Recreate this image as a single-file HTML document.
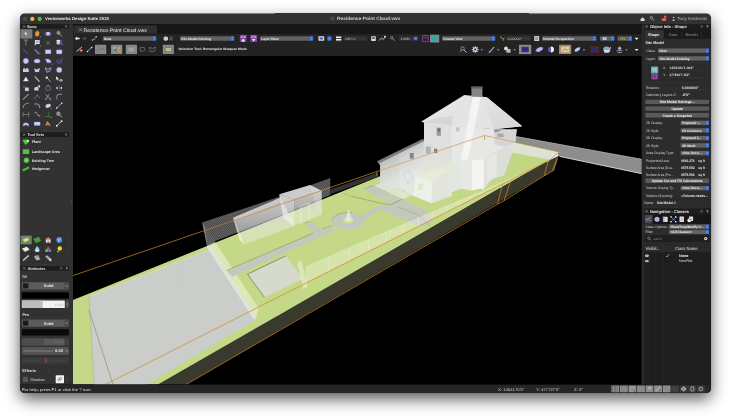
<!DOCTYPE html>
<html lang="en">
<head>
<meta charset="utf-8">
<title>Vectorworks Design Suite 2023 - Residence-Point Cloud.vwx</title>
<style>
html,body{margin:0;padding:0;background:#fff;width:731px;height:420px;overflow:hidden}
body{position:relative;font-family:"Liberation Sans",sans-serif}
#shadow{position:absolute;left:20.0px;top:13.5px;width:691.0px;height:379.5px;border-radius:5px;
 box-shadow:0 6px 16px rgba(0,0,0,.66),0 0 1px rgba(0,0,0,.5);background:#222}
#app{position:absolute;left:0;top:0;width:731px;height:420px;display:block;will-change:transform;
 clip-path:inset(13.5px 20.0px 27.0px 20.0px round 4.5px)}
#app text{font-family:"Liberation Sans",sans-serif;white-space:pre;text-rendering:geometricPrecision}
</style>
</head>
<body>
<div id="shadow"></div>
<svg id="app" viewBox="0 0 731 420" width="731" height="420">
<g id="viewport">
<rect x="0.00" y="0.00" width="731.00" height="420.00" fill="#000"/>
<defs>
<pattern id="hatch" width="1.6" height="1.6" patternUnits="userSpaceOnUse" patternTransform="rotate(35)"><rect width="1.6" height="1.6" fill="#6c6c6c"/><rect width="0.8" height="1.6" fill="#4a4a4a"/></pattern>
<linearGradient id="gShed" x1="0" y1="0" x2="0" y2="1"><stop offset="0" stop-color="#c4c6c4" stop-opacity="0.95"/><stop offset="1" stop-color="#ffffff" stop-opacity="0.25"/></linearGradient>
<linearGradient id="gWall" x1="0" y1="0" x2="0" y2="1"><stop offset="0" stop-color="#dcdcdc"/><stop offset="1" stop-color="#e4e8dc"/></linearGradient>
<linearGradient id="gRoofR" x1="0" y1="0" x2="1" y2="1"><stop offset="0" stop-color="#e4e4e4"/><stop offset="1" stop-color="#d6d6d6"/></linearGradient>
<linearGradient id="gStack" x1="0" y1="0" x2="0" y2="1"><stop offset="0" stop-color="#f7f7f7" stop-opacity="1"/><stop offset="0.5" stop-color="#f4f4f4" stop-opacity="0.9"/><stop offset="1" stop-color="#ffffff" stop-opacity="0.55"/></linearGradient>
<linearGradient id="gShed2" x1="0" y1="0" x2="0" y2="1"><stop offset="0" stop-color="#d4d6d4" stop-opacity="0.95"/><stop offset="1" stop-color="#ffffff" stop-opacity="0.5"/></linearGradient>
<linearGradient id="gExt" gradientUnits="userSpaceOnUse" x1="400" y1="151.5" x2="411" y2="174.5"><stop offset="0" stop-color="#bcbebc"/><stop offset="0.35" stop-color="#cdcfcc"/><stop offset="1" stop-color="#e0e2df"/></linearGradient>
<linearGradient id="gExt2" gradientUnits="userSpaceOnUse" x1="400" y1="151.5" x2="411" y2="174.5"><stop offset="0" stop-color="#c6c8c6"/><stop offset="0.4" stop-color="#d6d8d5"/><stop offset="1" stop-color="#e4e6e2"/></linearGradient>
<clipPath id="vp"><rect x="73" y="56" width="569.4" height="328.6"/></clipPath>
</defs>
<g id="scene" clip-path="url(#vp)">
<polygon points="515.3,136.2 642.4,159.2 642.4,174.0 559.6,156.6 514.0,142.0" fill="#8d8d8d"/>
<polyline points="515.3,136.4 642.4,159.4" fill="none" stroke="#b0b0b0" stroke-width="0.7"/>
<polyline points="559.6,156.4 642.4,173.8" fill="none" stroke="#d6d6d6" stroke-width="0.9"/>
<polygon points="158.0,384.6 545.6,162.0 548.4,160.8 559.5,152.2 553.7,170.5 544.2,175.8 186.0,384.6" fill="#39392e"/>
<polygon points="73.0,300.0 378.0,177.0 483.0,136.0 514.0,142.0 559.6,152.0 548.4,161.4 545.0,162.2 158.0,384.6 73.0,384.6" fill="#c5d888"/>
<polygon points="503.9,175.6 512.8,150.7 549.5,159.6 548.4,161.4 545.0,162.2 500.0,188.0" fill="#c3d684"/>
<polygon points="484.0,137.0 514.0,142.0 559.4,152.0 549.5,159.6 511.0,152.6 486.0,147.0" fill="#dde2d4"/>
<polygon points="550.4,159.8 558.2,156.2 558.6,153.0 549.2,158.0" fill="#e8e8e8"/>
<polygon points="89.4,296.4 211.4,249.2 257.0,319.3 146.2,384.6 94.2,384.6" fill="#cacdc9"/>
<polyline points="89.4,296.4 211.4,249.2" fill="none" stroke="#dfe2dc" stroke-width="0.5"/>
<polyline points="89.0,296.0 94.0,384.6" fill="none" stroke="#aab08c" stroke-width="0.5"/>
<polyline points="89.0,310.0 113.0,384.6" fill="none" stroke="#6c7048" stroke-width="0.45"/>
<polyline points="168.0,261.5 176.0,270.0 183.0,281.0" fill="none" stroke="#c0c3bd" stroke-width="0.4"/>
<polygon points="203.5,224.0 259.0,309.0 254.6,320.5 207.3,247.9" fill="#ffffff" opacity="0.42"/>
<polygon points="226.7,270.5 313.8,233.0 322.0,229.3 332.0,225.3 335.8,230.2 288.6,251.0 232.0,277.0" fill="#c3c8bc"/>
<polyline points="226.7,270.4 313.8,232.9" fill="none" stroke="#7f8a58" stroke-width="0.5"/>
<polyline points="322.0,229.2 332.0,225.2" fill="none" stroke="#8a9562" stroke-width="0.45"/>
<polygon points="305.0,223.0 310.5,221.4 322.0,229.3 313.8,233.0" fill="#c3c8bc"/>
<polyline points="305.0,223.0 310.5,221.4" fill="none" stroke="#8a9562" stroke-width="0.45"/>
<polygon points="247.5,274.2 285.8,255.8 303.0,279.0 264.2,297.5" fill="#d6dacd"/>
<polyline points="264.4,297.4 247.5,274.2 285.8,255.8" fill="none" stroke="#7d8a5c" stroke-width="0.9"/>
<polygon points="297.0,262.5 301.5,260.5 307.5,287.0 303.5,289.0" fill="#ffffff" opacity="0.4"/>
<ellipse cx="348.30" cy="221.00" rx="16.4" ry="8.6" fill="#c3c8bc"/>
<path d="M331.9 221 A16.4 8.6 0 0 1 352 212.7" fill="none" stroke="#7f8a58" stroke-width="0.45"/>
<ellipse cx="348.10" cy="221.30" rx="5.8" ry="2.7" fill="#cbdc94"/>
<polygon points="343.6,221.0 346.8,213.6 348.5,208.8 350.2,213.6 353.2,221.0 348.4,222.6" fill="#f6f8f2" opacity="0.4"/>
<polygon points="347.2,220.0 348.5,209.4 349.8,220.0" fill="#ffffff" opacity="0.5"/>
<polygon points="361.0,215.4 379.6,204.6 384.0,207.4 364.4,219.6" fill="#c3c8bc"/>
<polygon points="374.2,185.4 380.4,183.6 413.5,194.3 402.5,199.2" fill="#dde4cf"/>
<polygon points="363.8,188.8 374.2,185.4 402.5,199.2 390.0,204.7" fill="#c3c8bc"/>
<polyline points="377.4,197.1 388.9,192.6" fill="none" stroke="#cfde98" stroke-width="0.7"/>
<polyline points="380.8,199.1 392.6,194.4" fill="none" stroke="#cfde98" stroke-width="0.7"/>
<polyline points="384.2,201.2 396.3,196.2" fill="none" stroke="#cfde98" stroke-width="0.7"/>
<polyline points="387.6,203.3 400.0,198.0" fill="none" stroke="#cfde98" stroke-width="0.7"/>
<polygon points="379.0,205.0 390.0,204.7 396.3,202.0 404.6,199.9 428.0,211.8 433.0,221.4 423.0,226.4 404.6,220.6 384.5,211.6" fill="#c3c8bc"/>
<polyline points="352.0,196.4 381.0,203.3 390.0,204.7 402.5,199.2" fill="none" stroke="#6f7a52" stroke-width="0.45"/>
<polyline points="363.8,188.8 374.2,185.4" fill="none" stroke="#7f8a60" stroke-width="0.4"/>
<polyline points="397.0,206.8 419.0,215.0 430.0,226.0" fill="none" stroke="#8a9468" stroke-width="0.4"/>
<polyline points="343.0,193.3 352.0,196.4" fill="none" stroke="#8a9a5e" stroke-width="0.4"/>
<polygon points="306.0,266.5 390.0,230.0 476.0,193.5 530.0,169.4 530.0,170.2 476.0,197.0 306.0,282.6" fill="#ffffff" opacity="0.3"/>
<line x1="306.00" y1="266.50" x2="306.00" y2="283.34" stroke="#ffffff" stroke-width="0.5" opacity="0.5"/>
<line x1="328.32" y1="256.89" x2="328.32" y2="272.09" stroke="#ffffff" stroke-width="0.5" opacity="0.5"/>
<line x1="349.08" y1="247.96" x2="349.08" y2="261.63" stroke="#ffffff" stroke-width="0.5" opacity="0.5"/>
<line x1="368.38" y1="239.64" x2="368.38" y2="251.91" stroke="#ffffff" stroke-width="0.5" opacity="0.5"/>
<line x1="386.34" y1="231.92" x2="386.34" y2="242.86" stroke="#ffffff" stroke-width="0.5" opacity="0.5"/>
<line x1="403.03" y1="224.73" x2="403.03" y2="234.45" stroke="#ffffff" stroke-width="0.5" opacity="0.5"/>
<line x1="418.56" y1="218.04" x2="418.56" y2="226.63" stroke="#ffffff" stroke-width="0.5" opacity="0.5"/>
<line x1="433.00" y1="211.83" x2="433.00" y2="219.35" stroke="#ffffff" stroke-width="0.5" opacity="0.5"/>
<line x1="446.43" y1="206.04" x2="446.43" y2="212.59" stroke="#ffffff" stroke-width="0.5" opacity="0.5"/>
<line x1="458.92" y1="200.67" x2="458.92" y2="206.29" stroke="#ffffff" stroke-width="0.5" opacity="0.5"/>
<line x1="470.54" y1="195.67" x2="470.54" y2="200.44" stroke="#ffffff" stroke-width="0.5" opacity="0.5"/>
<line x1="481.34" y1="191.02" x2="481.34" y2="195.00" stroke="#ffffff" stroke-width="0.5" opacity="0.5"/>
<line x1="491.38" y1="186.69" x2="491.38" y2="189.94" stroke="#ffffff" stroke-width="0.5" opacity="0.5"/>
<line x1="500.73" y1="182.67" x2="500.73" y2="185.23" stroke="#ffffff" stroke-width="0.5" opacity="0.5"/>
<line x1="509.42" y1="178.93" x2="509.42" y2="180.85" stroke="#ffffff" stroke-width="0.5" opacity="0.5"/>
<line x1="517.50" y1="175.45" x2="517.50" y2="176.78" stroke="#ffffff" stroke-width="0.5" opacity="0.5"/>
<polyline points="306.0,266.5 390.0,230.0 476.0,193.5" fill="none" stroke="#ffffff" stroke-width="0.4" opacity="0.45"/>
<polygon points="330.3,189.6 378.0,172.6 378.0,177.0 330.8,194.0" fill="#3c3c3c" opacity="0.85"/>
<polygon points="202.0,222.5 250.3,206.6 281.0,196.0 330.3,178.0 330.3,195.0 236.0,233.0 207.5,244.0" fill="url(#hatch)" opacity="0.95"/>
<polygon points="202.4,223.0 204.6,227.3 207.5,247.6 205.6,240.0" fill="#ffffff" opacity="0.35"/>
<polygon points="232.9,217.8 280.5,197.6 283.0,202.0 236.0,221.0" fill="#c6c7c6"/>
<polygon points="236.0,221.0 283.0,202.0 294.5,226.0 244.0,244.5" fill="url(#gShed)"/>
<polygon points="232.9,217.8 236.0,221.0 244.0,244.5 239.4,239.6" fill="#ffffff" opacity="0.6"/>
<polygon points="279.2,194.2 310.0,185.0 321.7,190.8 294.2,199.4" fill="#cbcbcb"/>
<polygon points="279.2,194.2 294.2,199.4 294.2,225.8 283.3,218.3" fill="url(#gShed2)"/>
<polygon points="294.2,199.4 321.7,190.8 321.7,215.0 294.2,225.8" fill="url(#gShed)"/>
<polyline points="300.8,223.4 300.8,205.8 309.2,203.3 309.2,220.8" fill="none" stroke="#f4f4f4" stroke-width="0.5"/>
<polygon points="310.0,185.0 321.7,190.8 321.7,215.0 316.0,205.0" fill="#ffffff" opacity="0.18"/>
<polygon points="380.2,163.0 423.0,141.0 452.0,150.0 452.0,196.0 431.6,203.2 413.0,195.6 404.4,190.2 380.2,184.4" fill="url(#gExt)"/>
<polygon points="377.0,161.3 423.0,138.8 424.4,141.0 378.6,163.6" fill="#7c7c7c"/>
<polygon points="378.6,163.4 424.4,141.0 424.8,143.2 380.2,165.2" fill="#b9b9b9"/>
<polygon points="424.0,122.0 452.0,125.6 494.0,129.3 516.7,129.3 515.4,142.0 512.8,150.7 503.9,175.6 491.4,179.0 483.4,190.0 469.6,184.5 448.2,193.5 431.6,203.2 424.0,198.6 424.0,141.0" fill="url(#gWall)"/>
<polygon points="380.2,163.0 399.4,153.4 399.4,189.0 380.2,184.4" fill="url(#gExt)"/>
<polygon points="399.4,153.4 424.0,141.5 424.0,178.0 413.0,186.0 413.0,195.6 404.4,190.2 399.4,189.0" fill="url(#gExt2)"/>
<polyline points="403.6,174.6 408.6,170.0 413.4,177.6 408.0,183.4 403.6,174.6" fill="none" stroke="#b4bab0" stroke-width="0.4"/>
<polygon points="415.7,176.2 436.4,168.0 450.2,169.3 432.3,181.8" fill="#e6ecd6"/>
<polygon points="415.7,176.2 432.3,181.8 431.6,203.2 413.0,195.6" fill="#eef0ea"/>
<polygon points="432.3,181.8 450.2,169.3 448.2,193.5 431.6,203.2" fill="#e2e5de"/>
<rect x="417.80" y="183.80" width="5.50" height="6.20" fill="#dfe8c8"/>
<polygon points="436.4,168.0 461.3,160.0 470.0,163.0 450.2,169.3" fill="#e3e9d6"/>
<polygon points="450.2,169.3 461.0,158.3 461.0,188.6 448.2,193.5" fill="#e4e7e0"/>
<polygon points="461.0,158.3 474.0,152.0 486.0,150.5 484.3,155.0 471.8,157.5" fill="#eceee8"/>
<polygon points="461.0,158.3 471.8,157.5 471.8,190.5 460.0,188.6" fill="#e6e8e4"/>
<polygon points="471.8,157.5 484.3,155.0 484.3,187.6 471.8,190.5" fill="#f4f5f2"/>
<polygon points="484.3,155.0 505.0,146.0 512.8,150.7 503.9,175.6 491.4,179.0 484.3,187.6" fill="#dcdfd8"/>
<polygon points="486.5,158.0 497.0,153.0 496.4,176.4 486.5,183.0" fill="#e6e8e3"/>
<polygon points="424.0,122.0 451.4,125.6 451.4,152.8 424.0,141.4" fill="#dfdfdf"/>
<polygon points="451.4,125.6 494.0,129.3 494.6,146.0 484.4,136.0 451.4,147.4" fill="#e7e7e7"/>
<polygon points="494.6,132.8 516.7,129.3 515.4,142.0 505.0,146.5 494.6,144.0" fill="#d4d4d4"/>
<polygon points="452.0,147.4 484.4,136.0 494.6,146.0 505.0,146.5 483.4,159.7 461.3,161.0 452.0,164.0" fill="#e6e8e4"/>
<rect x="436.70" y="127.60" width="4.20" height="8.20" fill="#9c9c9c"/>
<rect x="437.50" y="128.60" width="2.60" height="3.00" fill="#6c6c6c"/>
<rect x="409.80" y="153.00" width="4.00" height="5.70" fill="#7f8c8c"/>
<rect x="425.70" y="146.50" width="5.10" height="7.20" fill="#b4b4b4"/>
<rect x="434.00" y="148.70" width="3.30" height="4.40" fill="#8c8078"/>
<rect x="456.00" y="127.20" width="3.40" height="4.40" fill="#c6c6c6"/>
<rect x="497.40" y="133.60" width="6.20" height="3.60" fill="#a8a8a8"/>
<polygon points="421.0,121.8 464.3,95.0 486.8,97.2 522.2,126.3 494.0,129.3 452.0,126.2 424.3,122.6" fill="#e4e4e4"/>
<polygon points="486.8,97.2 522.2,126.3 494.0,129.3 480.5,96.6" fill="url(#gRoofR)"/>
<polygon points="434.2,118.5 452.3,115.8 452.3,125.6 425.4,122.6" fill="#d6d6d6"/>
<polygon points="493.9,129.3 502.4,130.7 494.6,132.8" fill="#9a9a9a"/>
<polygon points="473.0,95.6 480.8,96.2 468.0,160.0 461.0,160.5" fill="url(#gStack)"/>
<rect x="471.40" y="86.70" width="11.00" height="9.70" fill="#878787"/>
<rect x="471.20" y="86.50" width="11.40" height="2.10" fill="#616161"/>
<polygon points="471.4,95.4 482.4,95.4 482.4,97.0 471.4,96.4" fill="#878787"/>
<polyline points="73.0,275.6 202.0,231.4" fill="none" stroke="#d2862a" stroke-width="0.72"/>
<polyline points="202.0,231.4 233.0,220.8" fill="none" stroke="#a88442" stroke-width="0.72"/>
<polyline points="233.0,220.8 380.2,170.4" fill="none" stroke="#cf8a34" stroke-width="0.72"/>
<polyline points="380.2,170.4 484.2,135.5 515.0,142.2" fill="none" stroke="#d79a52" stroke-width="0.72"/>
<polyline points="515.0,142.2 559.5,152.0" fill="none" stroke="#a8844c" stroke-width="0.8"/>
<polyline points="559.5,152.0 548.3,160.8 105.0,384.6" fill="none" stroke="#d2862a" stroke-width="0.72"/>
<polyline points="186.0,384.6 497.5,204.2 504.2,200.6 544.2,175.8 553.7,170.4 557.6,158.0" fill="none" stroke="#d2862a" stroke-width="0.72"/>
<polyline points="548.3,160.8 544.2,175.8" fill="none" stroke="#d2862a" stroke-width="0.7"/>
<polyline points="556.9,159.2 552.6,170.2" fill="none" stroke="#d2862a" stroke-width="0.7"/>
<polyline points="502.5,184.2 497.5,204.2" fill="none" stroke="#d2862a" stroke-width="0.7"/>
<polyline points="510.0,182.5 504.2,200.6" fill="none" stroke="#d2862a" stroke-width="0.7"/>
<polyline points="376.9,171.6 376.9,176.0" fill="none" stroke="#d2862a" stroke-width="0.7"/>
<polyline points="484.4,135.6 484.6,140.0" fill="none" stroke="#d2862a" stroke-width="0.7"/>
</g>
</g>
<g id="titlebar">
<rect x="20.00" y="13.00" width="691.00" height="11.10" fill="#323232"/>
<circle cx="25.00" cy="18.90" r="2.1" fill="#4b4b4b"/>
<circle cx="32.30" cy="18.90" r="2.1" fill="#f5b63d"/>
<circle cx="39.70" cy="18.90" r="2.1" fill="#55c13f"/>
<text x="45.00" y="20.36" font-size="4.1" fill="#ececec" font-weight="bold" textLength="64.00" lengthAdjust="spacingAndGlyphs">Vectorworks Design Suite 2023</text>
<circle cx="332.30" cy="18.30" r="1.5" fill="none" stroke="#888" stroke-width="0.5"/>
<text x="337.10" y="19.97" font-size="4.7" fill="#cfcfcf" font-weight="bold" textLength="63.20" lengthAdjust="spacingAndGlyphs">Residence-Point Cloud.vwx</text>
<path d="M640.6 19.3 L642.6 17.2 L644.6 19.3 V21 H640.6 Z" fill="#d8d8d8"/>
<circle cx="651.40" cy="17.60" r="1.2" fill="none" stroke="#cfcfcf" stroke-width="0.6"/>
<line x1="652.30" y1="18.60" x2="654.20" y2="20.60" stroke="#cfcfcf" stroke-width="0.7"/>
<path d="M661.6 18.4 H666.2 V21 H661.6 Z" fill="#e24a3b"/>
<circle cx="665.20" cy="16.90" r="1.3" fill="#ff4f44"/>
<path d="M662.4 18.6 L663.9 19.8 L665.4 18.6" fill="none" stroke="#fff" stroke-width="0.4"/>
<circle cx="673.60" cy="17.50" r="0.8" fill="#c8c8c8"/>
<path d="M672.2 20.8 Q673.6 17.9 675 20.8 Z" fill="#c8c8c8"/>
<text x="677.20" y="19.93" font-size="4.3" fill="#bdbdbd" textLength="29.50" lengthAdjust="spacingAndGlyphs">Tony Kostreski</text>
</g>
<g id="left-palettes">
<rect x="20.00" y="24.10" width="53.00" height="360.50" fill="#323232"/>
<rect x="69.60" y="24.10" width="3.40" height="360.50" fill="#313131"/>
<rect x="20.40" y="24.20" width="48.60" height="4.40" fill="#1c1c1c"/>
<path d="M22.85 25.25 L25.35 27.75 M25.35 25.25 L22.85 27.75" fill="none" stroke="#c8c8c8" stroke-width="0.5"/>
<text x="27.20" y="27.88" font-size="3.9" fill="#e4e4e4" font-weight="bold" textLength="9.50" lengthAdjust="spacingAndGlyphs">Basic</text>
<line x1="65.00" y1="25.50" x2="67.20" y2="25.50" stroke="#9a9a9a" stroke-width="0.4"/>
<line x1="65.00" y1="26.40" x2="67.20" y2="26.40" stroke="#9a9a9a" stroke-width="0.4"/>
<line x1="65.00" y1="27.30" x2="67.20" y2="27.30" stroke="#9a9a9a" stroke-width="0.4"/>
<rect x="20.40" y="29.30" width="11.90" height="9.30" fill="#7c7c7c"/>
<path d="M24.7 31.199999999999996 L24.7 35.4 L25.7 34.5 L26.5 36.199999999999996 L27.2 35.9 L26.4 34.3 L27.799999999999997 34.199999999999996 Z" fill="#fff" stroke="#444" stroke-width="0.3"/>
<path d="M35.1 33.3 Q34.7 36.599999999999994 37.300000000000004 36.599999999999994 Q39.5 36.4 39.300000000000004 31.999999999999996 L38.5 31.199999999999996 L37.7 30.9 L36.7 31.099999999999998 L35.9 31.799999999999997 Z" fill="#e09a45" stroke="#8a5a20" stroke-width="0.3"/>
<path d="M39.7 37.199999999999996 l1.1 0 l0 -1.1 z" fill="#aaa"/>
<ellipse cx="48.10" cy="33.80" rx="3.4" ry="1.5" fill="none" stroke="#7b6fd0" stroke-width="0.7"/>
<ellipse cx="48.10" cy="33.60" rx="1.9" ry="1.9" fill="#c9c9f3"/>
<ellipse cx="48.10" cy="33.80" rx="3.4" ry="1.5" fill="none" stroke="#9d92e6" stroke-width="0.5" stroke-dasharray="5.5 20" stroke-dashoffset="-1"/>
<circle cx="58.40" cy="32.80" r="1.5" fill="#8a8a8a" stroke="#b5b5b5" stroke-width="0.6"/>
<line x1="59.50" y1="34.00" x2="61.60" y2="36.40" stroke="#a9a9a9" stroke-width="0.9"/>
<path d="M23.7 40.099999999999994 H28.099999999999998 M25.9 40.099999999999994 V45.699999999999996" fill="none" stroke="#8c8c8c" stroke-width="0.9"/>
<rect x="34.90" y="40.10" width="4.80" height="3.90" fill="#e6e6f4"/>
<line x1="35.70" y1="41.40" x2="38.90" y2="41.40" stroke="#555" stroke-width="0.4"/>
<line x1="35.70" y1="42.50" x2="38.90" y2="42.50" stroke="#555" stroke-width="0.4"/>
<path d="M34.9 44.0 L34.300000000000004 45.699999999999996 L36.5 44.0Z" fill="#e6e6f4"/>
<path d="M39.7 46.4 l1.1 0 l0 -1.1 z" fill="#aaa"/>
<path d="M46.4 41.099999999999994 L49.800000000000004 44.5 M49.800000000000004 41.099999999999994 L46.4 44.5" fill="none" stroke="#9a9a9a" stroke-width="0.6"/>
<path d="M56.6 40.4 H60.2 V43.4 Q58.400000000000006 45.8 56.6 43.4 Z" fill="#c9c9f3" stroke="#8c86c8" stroke-width="0.3"/>
<ellipse cx="58.40" cy="40.40" rx="1.8" ry="0.6" fill="#f1f1ff"/>
<path d="M61.800000000000004 40.199999999999996 V44.599999999999994 M60.900000000000006 43.699999999999996 L61.800000000000004 45.199999999999996 L62.7 43.699999999999996" fill="none" stroke="#5b7fe6" stroke-width="0.6"/>
<line x1="23.30" y1="49.20" x2="28.30" y2="54.20" stroke="#7b6fd0" stroke-width="0.7"/>
<line x1="34.30" y1="50.00" x2="38.70" y2="54.60" stroke="#7b6fd0" stroke-width="0.7"/>
<line x1="35.50" y1="49.00" x2="39.90" y2="53.60" stroke="#7b6fd0" stroke-width="0.7"/>
<line x1="34.90" y1="49.50" x2="39.30" y2="54.10" stroke="#c9c9f3" stroke-width="0.5"/>
<rect x="45.20" y="49.80" width="5.80" height="4.10" fill="#c9c9f3" stroke="#7b6fd0" stroke-width="0.4"/>
<rect x="56.30" y="49.80" width="5.80" height="4.10" fill="#c9c9f3" rx="1" stroke="#7b6fd0" stroke-width="0.4"/>
<circle cx="25.90" cy="61.00" r="2.7" fill="#c9c9f3" stroke="#7b6fd0" stroke-width="0.4"/>
<ellipse cx="37.10" cy="61.00" rx="3.1" ry="2.1" fill="#c9c9f3" stroke="#7b6fd0" stroke-width="0.4"/>
<path d="M45.300000000000004 59.0 H48.1 Q50.9 59.6 51.1 62.8 H47.1 Z" fill="#c9c9f3" stroke="#7b6fd0" stroke-width="0.4"/>
<path d="M51.4 64.4 l1.1 0 l0 -1.1 z" fill="#aaa"/>
<path d="M56.2 61.6 Q58.2 58.6 59.6 60.6 T62.400000000000006 58.4 M56.6 62.6 Q59.2 64.0 62.2 62.0" fill="none" stroke="#7b6fd0" stroke-width="0.6"/>
<path d="M23.0 72.10000000000001 V69.10000000000001 L24.299999999999997 67.7 L25.5 69.5 L26.9 67.7 L28.799999999999997 69.5 V72.10000000000001 Z" fill="#c9c9f3"/>
<path d="M34.1 68.30000000000001 L36.5 69.5 L39.9 67.9 L39.1 71.7 L35.300000000000004 72.30000000000001 Z" fill="#c9c9f3"/>
<path d="M45.300000000000004 67.7 L47.7 69.10000000000001 L50.9 67.7 L50.1 71.10000000000001 L46.7 72.30000000000001 Z" fill="none" stroke="#c9c9f3" stroke-width="0.6"/>
<path d="M46.300000000000004 69.10000000000001 L47.7 70.10000000000001 L49.7 69.10000000000001 L49.300000000000004 70.5 L47.1 71.10000000000001 Z" fill="none" stroke="#7b6fd0" stroke-width="0.4"/>
<circle cx="59.20" cy="69.90" r="2.7" fill="#c9c9f3" stroke="#7b6fd0" stroke-width="0.3"/>
<path d="M25.9 76.4 L28.799999999999997 81.3 H23.0 Z" fill="#c9c9f3"/>
<path d="M25.9 78.0 L27.5 80.7 H24.299999999999997 Z" fill="#f4f4ff"/>
<line x1="34.70" y1="76.40" x2="37.30" y2="79.20" stroke="#a9a9a9" stroke-width="1.3"/>
<line x1="37.10" y1="79.00" x2="39.50" y2="81.60" stroke="#c9c9f3" stroke-width="1.1"/>
<circle cx="46.80" cy="77.60" r="1.2" fill="#e6e6f4"/>
<line x1="47.50" y1="78.40" x2="50.50" y2="81.60" stroke="#bdbdd8" stroke-width="0.8"/>
<path d="M56.2 76.2 L56.2 79.8 L57.1 79.0 L57.900000000000006 80.6 L58.6 80.2 L57.800000000000004 78.8 L58.800000000000004 78.7 Z" fill="#fff"/>
<ellipse cx="61.00" cy="80.40" rx="1.7" ry="1.1" fill="#d8d8e8"/>
<circle cx="61.00" cy="80.40" r="0.5" fill="#333"/>
<text x="22.80" y="87.94" font-size="3.2" fill="#9a9a9a">Ja</text>
<rect x="25.00" y="87.60" width="3.80" height="3.40" fill="#cfcfe8" stroke="#777" stroke-width="0.3"/>
<path d="M34.300000000000004 87.4 L38.5 86.4 V90.4 H34.300000000000004 Z" fill="#c9c9f3"/>
<path d="M37.7 85.6 L40.1 85.4 L39.9 87.8 Z" fill="#fff"/>
<circle cx="48.10" cy="88.20" r="2.4" fill="none" stroke="#8d8db0" stroke-width="0.6"/>
<path d="M47.300000000000004 85.0 L48.9 85.7 L47.5 86.5" fill="none" stroke="#b5b5d0" stroke-width="0.4"/>
<line x1="59.20" y1="85.20" x2="59.20" y2="90.80" stroke="#8d8db0" stroke-width="0.5"/>
<path d="M56.400000000000006 86.6 L58.400000000000006 88.0 L56.400000000000006 89.4 Z" fill="#d6d6ee"/>
<path d="M62.0 86.6 L60.0 88.0 L62.0 89.4 Z" fill="#d6d6ee"/>
<line x1="23.10" y1="99.50" x2="28.50" y2="94.10" stroke="#cfcfe0" stroke-width="1.0"/>
<line x1="23.10" y1="99.50" x2="24.90" y2="97.70" stroke="#777" stroke-width="1.2"/>
<path d="M34.2 99.10000000000001 L37.300000000000004 95.10000000000001 L40.0 98.10000000000001" fill="none" stroke="#8d8db8" stroke-width="0.6"/>
<line x1="36.20" y1="94.10" x2="38.40" y2="96.30" stroke="#8d8db8" stroke-width="0.5"/>
<path d="M45.5 94.3 L49.9 98.3 M49.1 94.10000000000001 L46.5 98.10000000000001" fill="none" stroke="#a8b0a0" stroke-width="0.7"/>
<circle cx="50.30" cy="98.90" r="0.9" fill="none" stroke="#c8b070" stroke-width="0.5"/>
<circle cx="46.10" cy="98.80" r="0.9" fill="none" stroke="#a8b0a0" stroke-width="0.5"/>
<path d="M56.800000000000004 99.3 V96.5 Q56.800000000000004 94.3 59.400000000000006 94.3 H62.0" fill="none" stroke="#b9b9dc" stroke-width="0.7"/>
<path d="M23.099999999999998 108.0 Q23.5 103.19999999999999 28.7 103.19999999999999" fill="none" stroke="#b9b9dc" stroke-width="0.7"/>
<path d="M34.5 104.0 Q39.5 103.0 39.7 108.0" fill="none" stroke="#7f7fb0" stroke-width="1.4"/>
<ellipse cx="48.10" cy="105.80" rx="2.8" ry="1.9" fill="#c9c9f3" transform="rotate(-18 48.1 105.6)"/>
<path d="M50.7 109.0 l1.1 0 l0 -1.1 z" fill="#aaa"/>
<line x1="56.60" y1="108.00" x2="61.60" y2="103.40" stroke="#bdbdd8" stroke-width="0.7"/>
<rect x="56.00" y="107.20" width="1.40" height="1.40" fill="#e0e0f0"/>
<rect x="61.00" y="102.60" width="1.40" height="1.40" fill="#e0e0f0"/>
<path d="M23.099999999999998 112.1 V116.9 M28.7 112.1 V116.9 M23.099999999999998 114.5 H28.7" fill="none" stroke="#8a8a8a" stroke-width="0.7"/>
<path d="M34.300000000000004 112.7 L36.300000000000004 112.1 L37.9 115.7 L39.9 115.1 L39.5 116.7" fill="none" stroke="#8a8a8a" stroke-width="1.0"/>
<path d="M48.7 111.7 V116.5 H45.1" fill="none" stroke="#4f8a4f" stroke-width="0.6"/>
<line x1="48.70" y1="116.50" x2="50.90" y2="117.50" stroke="#8a8a3a" stroke-width="0.6"/>
<path d="M50.7 117.9 l1.1 0 l0 -1.1 z" fill="#aaa"/>
<circle cx="58.40" cy="113.70" r="1.9" fill="#8c8c8c" stroke="#a8a8a8" stroke-width="0.5"/>
<line x1="59.80" y1="115.30" x2="62.20" y2="117.10" stroke="#d89038" stroke-width="1.0"/>
<path d="M22.9 125.8 A3 3 0 0 1 28.9 125.8 Z" fill="#e8e8ff" stroke="#6f6fe0" stroke-width="0.6"/>
<path d="M24.5 125.8 A1.4 1.4 0 0 1 27.299999999999997 125.8 Z" fill="#323232"/>
<rect x="34.10" y="122.00" width="6.00" height="3.60" fill="#c9c9f3" stroke="#7b6fd0" stroke-width="0.4"/>
<line x1="34.10" y1="123.20" x2="40.10" y2="123.20" stroke="#f4f4ff" stroke-width="0.5"/>
<path d="M45.1 126.0 L47.1 121.0 L48.7 122.6 L51.1 126.19999999999999 L48.5 124.8 Z" fill="#c98a3a"/>
<path d="M47.300000000000004 123.19999999999999 L49.9 126.0 L47.9 125.19999999999999 Z" fill="#9a8a70"/>
<line x1="56.80" y1="125.80" x2="61.40" y2="121.40" stroke="#e8e8f4" stroke-width="0.8"/>
<rect x="56.00" y="125.00" width="1.60" height="1.60" fill="#e8e8f4"/>
<rect x="60.80" y="120.40" width="1.60" height="1.60" fill="#e8e8f4"/>
<circle cx="43.60" cy="130.60" r="0.3" fill="#8a8a8a"/>
<circle cx="44.90" cy="130.60" r="0.3" fill="#8a8a8a"/>
<circle cx="46.20" cy="130.60" r="0.3" fill="#8a8a8a"/>
<rect x="20.40" y="132.30" width="48.60" height="4.70" fill="#1c1c1c"/>
<path d="M22.85 133.35 L25.35 135.85 M25.35 133.35 L22.85 135.85" fill="none" stroke="#c8c8c8" stroke-width="0.5"/>
<text x="27.40" y="135.98" font-size="3.9" fill="#e4e4e4" font-weight="bold" textLength="16.60" lengthAdjust="spacingAndGlyphs">Tool Sets</text>
<line x1="65.00" y1="133.60" x2="67.20" y2="133.60" stroke="#9a9a9a" stroke-width="0.4"/>
<line x1="65.00" y1="134.50" x2="67.20" y2="134.50" stroke="#9a9a9a" stroke-width="0.4"/>
<line x1="65.00" y1="135.40" x2="67.20" y2="135.40" stroke="#9a9a9a" stroke-width="0.4"/>
<path d="M22.8 141.1 Q22.8 139.1 25 139.7 Q26.6 138.7 27.6 140.1 Q29.6 140.1 29 141.9 L25.6 145.1 Z" fill="#52c43c"/>
<circle cx="27.80" cy="140.90" r="1.1" fill="#dff5d6"/>
<text x="31.90" y="143.45" font-size="3.8" fill="#e8e8e8" font-weight="bold" textLength="8.90" lengthAdjust="spacingAndGlyphs">Plant</text>
<path d="M22.6 149.20000000000002 H29 Q29.6 151.4 29 154.0 H22.6 Q23.2 151.4 22.6 149.20000000000002 Z" fill="#52c43c"/>
<text x="31.90" y="152.75" font-size="3.8" fill="#e8e8e8" font-weight="bold" textLength="28.00" lengthAdjust="spacingAndGlyphs">Landscape Area</text>
<circle cx="26.40" cy="160.20" r="2.7" fill="#52c43c"/>
<circle cx="26.40" cy="160.20" r="0.9" fill="#a6e890"/>
<text x="31.90" y="161.55" font-size="3.8" fill="#e8e8e8" font-weight="bold" textLength="22.20" lengthAdjust="spacingAndGlyphs">Existing Tree</text>
<path d="M22.4 169.6 L28.6 166.6 L29.6 168.2 L23.4 171.6 Z" fill="#52c43c"/>
<path d="M22.4 169.6 L23.4 171.6 L29.6 168.2 L29.4 167.8 L23.2 170.8Z" fill="#2f8f25"/>
<text x="31.90" y="170.35" font-size="3.8" fill="#e8e8e8" font-weight="bold" textLength="17.60" lengthAdjust="spacingAndGlyphs">Hedgerow</text>
<circle cx="71.30" cy="200.00" r="0.25" fill="#9a9a9a"/>
<circle cx="71.30" cy="201.30" r="0.25" fill="#9a9a9a"/>
<circle cx="71.30" cy="202.60" r="0.25" fill="#9a9a9a"/>
<circle cx="71.30" cy="203.90" r="0.25" fill="#9a9a9a"/>
<line x1="20.40" y1="235.40" x2="20.40" y2="262.30" stroke="#2a2a2a" stroke-width="0.5"/>
<line x1="31.90" y1="235.40" x2="31.90" y2="262.30" stroke="#2a2a2a" stroke-width="0.5"/>
<line x1="42.90" y1="235.40" x2="42.90" y2="262.30" stroke="#2a2a2a" stroke-width="0.5"/>
<line x1="53.90" y1="235.40" x2="53.90" y2="262.30" stroke="#2a2a2a" stroke-width="0.5"/>
<line x1="64.90" y1="235.40" x2="64.90" y2="253.40" stroke="#2a2a2a" stroke-width="0.5"/>
<line x1="20.40" y1="235.40" x2="64.90" y2="235.40" stroke="#2a2a2a" stroke-width="0.5"/>
<line x1="20.40" y1="244.60" x2="64.90" y2="244.60" stroke="#2a2a2a" stroke-width="0.5"/>
<line x1="20.40" y1="253.40" x2="64.90" y2="253.40" stroke="#2a2a2a" stroke-width="0.5"/>
<line x1="20.40" y1="262.30" x2="53.90" y2="262.30" stroke="#2a2a2a" stroke-width="0.5"/>
<rect x="20.60" y="235.60" width="11.10" height="8.80" fill="#7c7c7c"/>
<path d="M21.9 239.3 L27.9 237.1 L29.9 240.5 L24.299999999999997 242.9 Z" fill="#9bd25a" stroke="#3f7f2a" stroke-width="0.4"/>
<path d="M23.299999999999997 239.5 L27.5 238.1 L28.5 240.1 L24.7 241.70000000000002 Z" fill="#c6ea8a"/>
<path d="M33.400000000000006 239.1 L38.800000000000004 237.1 L41.0 240.70000000000002 L36.0 242.9 Z" fill="#57a83c"/>
<path d="M34.800000000000004 239.1 L37.400000000000006 241.9 M36.400000000000006 238.5 L38.800000000000004 241.3 M38.0 237.9 L40.0 240.70000000000002" fill="none" stroke="#2f6f22" stroke-width="0.5"/>
<path d="M45.2 239.5 L48.2 236.9 L51.2 239.5 Z" fill="#c98a5a"/>
<rect x="45.80" y="239.50" width="4.80" height="3.20" fill="#e6e2dc"/>
<rect x="47.60" y="240.70" width="1.20" height="2.00" fill="#8a6a4a"/>
<circle cx="59.20" cy="239.90" r="2.8" fill="#4f8fe0"/>
<path d="M57.400000000000006 238.3 Q59.2 239.5 60.800000000000004 237.9 Q60.2 240.9 58.6 242.1 Q56.800000000000004 240.5 57.400000000000006 238.3Z" fill="#7db4ee"/>
<path d="M22.099999999999998 248.6 L26.7 246.79999999999998 L29.7 249.6 L25.099999999999998 251.79999999999998 Z" fill="#ececec"/>
<path d="M22.099999999999998 248.6 L25.099999999999998 251.79999999999998 L25.099999999999998 252.6 L22.099999999999998 249.39999999999998Z" fill="#a8a090"/>
<path d="M37.2 246.0 Q40.2 249.79999999999998 39.6 251.0 Q37.2 253.2 34.800000000000004 251.0 Q34.2 249.79999999999998 37.2 246.0Z" fill="#9fd0f4"/>
<ellipse cx="37.20" cy="250.80" rx="1.5" ry="0.9" fill="#e6f4ff"/>
<path d="M48.2 246.2 L50.0 249.2 H46.400000000000006Z" fill="#d84a4a"/>
<rect x="45.20" y="249.20" width="3.00" height="2.80" fill="#4fb84f"/>
<circle cx="49.80" cy="250.60" r="1.6" fill="#4f7fe0"/>
<circle cx="59.80" cy="248.40" r="2.2" fill="#f4d83a"/>
<path d="M58.6 250.0 L56.800000000000004 252.0 L57.800000000000004 252.6 L59.800000000000004 250.6Z" fill="#c8b040"/>
<path d="M22.5 260.09999999999997 L28.299999999999997 255.09999999999997 L29.299999999999997 256.09999999999997 L23.5 261.09999999999997Z" fill="#c8c8d8"/>
<line x1="23.50" y1="259.10" x2="28.30" y2="255.10" stroke="#8a7fd0" stroke-width="0.5"/>
<path d="M34.0 255.89999999999998 L38.400000000000006 255.09999999999997 L40.400000000000006 259.5 L36.2 260.5Z" fill="#9a9a9a"/>
<path d="M35.0 256.9 L38.800000000000004 259.7" fill="none" stroke="#dcdcdc" stroke-width="0.9"/>
<path d="M45.2 256.5 L47.0 255.29999999999998 L51.2 259.09999999999997 L49.6 260.7Z" fill="#b0b0b0"/>
<ellipse cx="50.40" cy="259.90" rx="1.1" ry="1.3" fill="#dcdcdc" transform="rotate(-40 50.4 259.9)"/>
<circle cx="43.60" cy="264.40" r="0.3" fill="#8a8a8a"/>
<circle cx="44.90" cy="264.40" r="0.3" fill="#8a8a8a"/>
<circle cx="46.20" cy="264.40" r="0.3" fill="#8a8a8a"/>
<rect x="20.40" y="266.10" width="48.60" height="4.60" fill="#1c1c1c"/>
<path d="M22.85 267.15 L25.35 269.65 M25.35 267.15 L22.85 269.65" fill="none" stroke="#c8c8c8" stroke-width="0.5"/>
<text x="27.40" y="269.78" font-size="3.9" fill="#e4e4e4" font-weight="bold" textLength="18.00" lengthAdjust="spacingAndGlyphs">Attributes</text>
<line x1="60.20" y1="267.40" x2="62.40" y2="267.40" stroke="#9a9a9a" stroke-width="0.4"/>
<line x1="60.20" y1="268.30" x2="62.40" y2="268.30" stroke="#9a9a9a" stroke-width="0.4"/>
<line x1="60.20" y1="269.20" x2="62.40" y2="269.20" stroke="#9a9a9a" stroke-width="0.4"/>
<text x="65.60" y="269.75" font-size="3.8" fill="#c8c8c8" font-weight="bold">?</text>
<text x="22.40" y="277.64" font-size="3.5" fill="#e0e0e0" font-weight="bold" textLength="4.60" lengthAdjust="spacingAndGlyphs">Fill</text>
<line x1="28.50" y1="276.60" x2="68.90" y2="276.60" stroke="#2a2a2a" stroke-width="0.5"/>
<rect x="21.90" y="282.20" width="47.00" height="7.30" fill="#5c5c5c" rx="0.8"/>
<rect x="64.40" y="282.20" width="4.50" height="7.30" fill="#4a4a4a" rx="0.8"/>
<rect x="23.00" y="283.40" width="5.20" height="4.90" fill="#1a1a1a" stroke="#3a3a3a" stroke-width="0.4"/>
<text x="48.60" y="287.28" font-size="3.9" fill="#f0f0f0" font-weight="bold" text-anchor="middle">Solid</text>
<path d="M65.6 285.3 L66.7 286.5 L67.8 285.3" fill="none" stroke="#e0e0e0" stroke-width="0.5"/>
<rect x="21.90" y="292.30" width="47.00" height="6.30" fill="#000"/>
<rect x="21.90" y="300.60" width="42.90" height="7.50" fill="#f2f2f2" rx="0.6"/>
<rect x="21.90" y="300.60" width="20.70" height="7.50" fill="#bdbdbd" rx="0.6"/>
<text x="63.40" y="305.61" font-size="3.4" fill="#b8b8b8" text-anchor="end">100%</text>
<rect x="65.60" y="300.60" width="3.30" height="7.50" fill="#4a4a4a" rx="0.6"/>
<line x1="67.20" y1="302.60" x2="67.20" y2="306.20" stroke="#bdbdbd" stroke-width="0.4"/>
<text x="22.40" y="315.78" font-size="3.9" fill="#e0e0e0" font-weight="bold" textLength="6.60" lengthAdjust="spacingAndGlyphs">Pen</text>
<line x1="30.50" y1="314.60" x2="68.90" y2="314.60" stroke="#2a2a2a" stroke-width="0.5"/>
<rect x="21.90" y="319.50" width="47.00" height="7.30" fill="#5c5c5c" rx="0.8"/>
<rect x="64.40" y="319.50" width="4.50" height="7.30" fill="#4a4a4a" rx="0.8"/>
<rect x="23.00" y="320.70" width="5.20" height="4.90" fill="#1a1a1a" stroke="#3a3a3a" stroke-width="0.4"/>
<text x="48.60" y="324.58" font-size="3.9" fill="#f0f0f0" font-weight="bold" text-anchor="middle">Solid</text>
<path d="M65.6 322.6 L66.7 323.8 L67.8 322.6" fill="none" stroke="#e0e0e0" stroke-width="0.5"/>
<rect x="21.90" y="329.10" width="47.00" height="6.40" fill="#0a0a0a"/>
<rect x="21.90" y="338.40" width="42.90" height="7.00" fill="#585858" rx="0.6"/>
<rect x="21.90" y="338.40" width="21.70" height="7.00" fill="#4c4c4c" rx="0.6"/>
<text x="63.40" y="343.21" font-size="3.4" fill="#777" text-anchor="end">100%</text>
<rect x="65.60" y="338.40" width="3.30" height="7.00" fill="#444" rx="0.6"/>
<rect x="21.90" y="347.10" width="47.00" height="7.60" fill="#545454" rx="0.8"/>
<line x1="23.30" y1="351.00" x2="53.00" y2="351.00" stroke="#c8c8c8" stroke-width="0.4"/>
<text x="55.00" y="352.35" font-size="3.8" fill="#f0f0f0" font-weight="bold" textLength="8.00" lengthAdjust="spacingAndGlyphs">0.03</text>
<path d="M65.8 350.4 L66.8 351.5 L67.8 350.4" fill="none" stroke="#e0e0e0" stroke-width="0.5"/>
<rect x="21.90" y="357.50" width="47.00" height="6.30" fill="#3b3b3b" rx="0.6"/>
<line x1="23.50" y1="360.60" x2="41.00" y2="360.60" stroke="#4a4a4a" stroke-width="0.4"/>
<line x1="50.00" y1="360.60" x2="67.00" y2="360.60" stroke="#4a4a4a" stroke-width="0.4"/>
<circle cx="45.70" cy="359.50" r="0.9" fill="none" stroke="#d04a3a" stroke-width="0.5"/>
<circle cx="45.70" cy="361.60" r="1.0" fill="none" stroke="#d04a3a" stroke-width="0.5"/>
<line x1="21.90" y1="366.50" x2="68.90" y2="366.50" stroke="#2a2a2a" stroke-width="0.5"/>
<text x="22.20" y="371.68" font-size="3.9" fill="#e0e0e0" font-weight="bold" textLength="14.00" lengthAdjust="spacingAndGlyphs">Effects</text>
<rect x="23.00" y="376.80" width="5.10" height="5.10" fill="#585858" rx="0.6"/>
<text x="30.20" y="380.75" font-size="3.8" fill="#d8d8d8" textLength="14.50" lengthAdjust="spacingAndGlyphs">Shadow</text>
<rect x="55.70" y="375.20" width="8.30" height="8.00" fill="#f4f4f4" rx="0.6"/>
<circle cx="58.90" cy="379.80" r="1.2" fill="none" stroke="#444" stroke-width="0.45"/>
<circle cx="60.60" cy="378.60" r="1.2" fill="none" stroke="#444" stroke-width="0.45"/>
<circle cx="66.80" cy="377.60" r="0.3" fill="#b0b0b0"/>
<circle cx="66.80" cy="379.10" r="0.3" fill="#b0b0b0"/>
<circle cx="66.80" cy="380.60" r="0.3" fill="#b0b0b0"/>
</g>
<g id="toolbars">
<rect x="73.00" y="24.10" width="569.40" height="9.60" fill="#171717"/>
<path d="M73.6 33.7 V26.6 Q73.6 25.4 74.8 25.4 H155.8 Q157 25.4 157 26.6 V33.7 Z" fill="#2f2f2f"/>
<path d="M78.90 28.20 L82.10 31.40 M82.10 28.20 L78.90 31.40" fill="none" stroke="#d0d0d0" stroke-width="0.5"/>
<text x="83.60" y="31.57" font-size="5.0" fill="#ececec" textLength="63.20" lengthAdjust="spacingAndGlyphs">Residence-Point Cloud.vwx</text>
<rect x="73.00" y="33.70" width="569.40" height="22.30" fill="#232323"/>
<path d="M74.8 38.5 L77.2 36.5 V37.7 H79.6 V39.3 H77.2 V40.5 Z" fill="#e8e8e8"/>
<path d="M86.8 38.5 L84.4 36.5 V37.7 H82.2 V39.3 H84.4 V40.5 Z" fill="#4a4a4a"/>
<line x1="92.20" y1="40.30" x2="96.40" y2="36.70" stroke="#8a8ae0" stroke-width="0.6"/>
<circle cx="92.60" cy="40.00" r="0.8" fill="#b8b8e8"/>
<circle cx="96.20" cy="36.90" r="0.8" fill="#b8b8e8"/>
<circle cx="94.60" cy="39.30" r="0.7" fill="#6a6ac8"/>
<rect x="102.80" y="36.30" width="53.40" height="4.40" fill="#626262" rx="0.8"/>
<rect x="152.60" y="36.30" width="3.60" height="4.40" fill="#3569d6" rx="0.8"/>
<path d="M153.6 38.2 L154.39999999999998 37.4 L155.2 38.2 M153.6 38.9 L154.39999999999998 39.7 L155.2 38.9" fill="none" stroke="#fff" stroke-width="0.35"/>
<text x="104.10" y="39.67" font-size="3.3" fill="#f0f0f0" font-weight="bold" textLength="7.40" lengthAdjust="spacingAndGlyphs">None</text>
<path d="M163.6 37.3 L165.8 36.3 L168 37.3 V39.9 L165.8 40.9 L163.6 39.9 Z" fill="#c8c8d8"/>
<rect x="169.20" y="36.50" width="3.60" height="4.00" fill="#4c4c4c" rx="0.5"/>
<rect x="180.00" y="36.30" width="54.20" height="4.40" fill="#626262" rx="0.8"/>
<rect x="230.60" y="36.30" width="3.60" height="4.40" fill="#3569d6" rx="0.8"/>
<path d="M231.6 38.2 L232.39999999999998 37.4 L233.2 38.2 M231.6 38.9 L232.39999999999998 39.7 L233.2 38.9" fill="none" stroke="#fff" stroke-width="0.35"/>
<text x="181.30" y="39.67" font-size="3.3" fill="#f0f0f0" font-weight="bold" textLength="29.60" lengthAdjust="spacingAndGlyphs">Site Model-Existing</text>
<rect x="239.80" y="34.90" width="6.80" height="7.20" fill="#7a3f9a" rx="0.5"/>
<rect x="240.60" y="35.70" width="5.20" height="2.40" fill="#b98ad6"/>
<line x1="243.20" y1="35.70" x2="243.20" y2="38.10" stroke="#5a2a7a" stroke-width="0.4"/>
<rect x="250.30" y="34.90" width="6.80" height="7.20" fill="#7a3f9a" rx="0.5"/>
<rect x="251.10" y="35.70" width="5.20" height="2.40" fill="#b98ad6"/>
<line x1="253.70" y1="35.70" x2="253.70" y2="38.10" stroke="#5a2a7a" stroke-width="0.4"/>
<path d="M241.79999999999998 41.7 V39.7 Q243.2 38.1 244.6 39.7 V41.7 Z" fill="#f0e8f8"/>
<path d="M251.89999999999998 39.1 H255.5 L253.7 41.7 Z" fill="#f0e8f8"/>
<rect x="260.00" y="36.30" width="53.20" height="4.40" fill="#626262" rx="0.8"/>
<rect x="309.60" y="36.30" width="3.60" height="4.40" fill="#3569d6" rx="0.8"/>
<path d="M310.59999999999997 38.2 L311.4 37.4 L312.2 38.2 M310.59999999999997 38.9 L311.4 39.7 L312.2 38.9" fill="none" stroke="#fff" stroke-width="0.35"/>
<text x="261.30" y="39.67" font-size="3.3" fill="#f0f0f0" font-weight="bold" textLength="17.40" lengthAdjust="spacingAndGlyphs">Layer Plane</text>
<rect x="318.40" y="36.30" width="5.80" height="4.40" fill="#d8dce8" rx="0.4"/>
<rect x="319.60" y="37.50" width="3.40" height="2.00" fill="#3a5fb0"/>
<rect x="327.20" y="36.30" width="4.40" height="4.40" fill="#3569d6" rx="0.8"/>
<path d="M328.4 38.2 L329.4 37.3 L330.4 38.2 M328.4 38.9 L329.4 39.8 L330.4 38.9" fill="none" stroke="#fff" stroke-width="0.35"/>
<rect x="336.00" y="36.50" width="5.40" height="1.60" fill="#f0f0f0"/>
<rect x="336.00" y="38.90" width="5.40" height="1.60" fill="#f0f0f0"/>
<line x1="336.00" y1="40.90" x2="341.40" y2="40.90" stroke="#999" stroke-width="0.4"/>
<rect x="343.60" y="36.20" width="23.60" height="4.60" fill="#333" rx="0.6"/>
<text x="345.00" y="39.71" font-size="3.4" fill="#c8c8c8" textLength="10.80" lengthAdjust="spacingAndGlyphs">1/8"=1'</text>
<rect x="371.20" y="36.30" width="4.60" height="4.60" fill="#dcdcdc" rx="0.4"/>
<rect x="372.20" y="37.10" width="2.60" height="1.80" fill="#555"/>
<path d="M379 40.5 L381.4 38.1 L383.2 39.5 L385.4 36.5" fill="none" stroke="#d8d8d8" stroke-width="0.8"/>
<circle cx="385.00" cy="36.70" r="0.9" fill="#f0f0f0"/>
<circle cx="391.80" cy="37.70" r="1.2" fill="none" stroke="#c8c8c8" stroke-width="0.55"/>
<line x1="392.80" y1="38.70" x2="394.80" y2="40.70" stroke="#c8c8c8" stroke-width="0.7"/>
<rect x="399.00" y="36.20" width="18.60" height="4.60" fill="#333" rx="0.6"/>
<text x="400.60" y="39.71" font-size="3.4" fill="#c8c8c8" textLength="9.40" lengthAdjust="spacingAndGlyphs">100%</text>
<rect x="413.80" y="36.70" width="3.60" height="3.60" fill="#3569d6" rx="0.6"/>
<path d="M414.6 38.0 L415.6 39.0 L416.6 38.0" fill="none" stroke="#fff" stroke-width="0.4"/>
<rect x="422.40" y="35.50" width="5.80" height="6.20" fill="none" rx="0.4" stroke="#c23ec2" stroke-width="0.7"/>
<line x1="422.40" y1="37.90" x2="428.20" y2="37.90" stroke="#c23ec2" stroke-width="0.5"/>
<line x1="425.60" y1="35.50" x2="425.60" y2="37.90" stroke="#c23ec2" stroke-width="0.5"/>
<rect x="430.00" y="34.80" width="9.20" height="7.60" fill="#8a8a8a" rx="0.5"/>
<rect x="431.40" y="36.30" width="6.40" height="4.60" fill="#2fa8a8" rx="0.4"/>
<rect x="441.90" y="36.30" width="53.30" height="4.40" fill="#626262" rx="0.8"/>
<rect x="491.60" y="36.30" width="3.60" height="4.40" fill="#3569d6" rx="0.8"/>
<path d="M492.59999999999997 38.2 L493.4 37.4 L494.2 38.2 M492.59999999999997 38.9 L493.4 39.7 L494.2 38.9" fill="none" stroke="#fff" stroke-width="0.35"/>
<text x="443.20" y="39.67" font-size="3.3" fill="#f0f0f0" font-weight="bold" textLength="19.20" lengthAdjust="spacingAndGlyphs">Custom View</text>
<path d="M500.6 36.9 L502.6 39.1 L504.6 37.7" fill="none" stroke="#e0c03a" stroke-width="0.7"/>
<circle cx="503.40" cy="39.90" r="0.9" fill="#d84a3a"/>
<circle cx="501.00" cy="36.90" r="0.7" fill="#5fc85f"/>
<rect x="506.40" y="36.20" width="24.20" height="4.60" fill="#333" rx="0.6"/>
<text x="507.60" y="39.71" font-size="3.4" fill="#c8c8c8" textLength="14.20" lengthAdjust="spacingAndGlyphs">0.00000°</text>
<rect x="534.20" y="36.10" width="5.00" height="4.80" fill="#cfcfcf" rx="0.4"/>
<rect x="535.20" y="37.10" width="3.00" height="2.80" fill="#9a9a9a"/>
<rect x="542.00" y="36.30" width="54.20" height="4.40" fill="#626262" rx="0.8"/>
<rect x="592.60" y="36.30" width="3.60" height="4.40" fill="#3569d6" rx="0.8"/>
<path d="M593.6 38.2 L594.4000000000001 37.4 L595.2 38.2 M593.6 38.9 L594.4000000000001 39.7 L595.2 38.9" fill="none" stroke="#fff" stroke-width="0.35"/>
<text x="543.30" y="39.67" font-size="3.3" fill="#f0f0f0" font-weight="bold" textLength="30.40" lengthAdjust="spacingAndGlyphs">Normal Perspective</text>
<rect x="600.00" y="36.30" width="14.40" height="4.40" fill="#626262" rx="0.8"/>
<rect x="610.80" y="36.30" width="3.60" height="4.40" fill="#3569d6" rx="0.8"/>
<ellipse cx="604.60" cy="38.50" rx="2.2" ry="1.5" fill="#d8d8f4"/>
<circle cx="604.60" cy="38.50" r="0.7" fill="#6a5acd"/>
<path d="M611.8 38.2 L612.6 37.4 L613.4 38.2 M611.8 38.9 L612.6 39.7 L613.4 38.9" fill="none" stroke="#fff" stroke-width="0.35"/>
<rect x="617.60" y="36.30" width="14.40" height="4.40" fill="#626262" rx="0.8"/>
<rect x="628.40" y="36.30" width="3.60" height="4.40" fill="#3569d6" rx="0.8"/>
<rect x="620.00" y="37.90" width="1.20" height="1.80" fill="#d85a4a"/>
<rect x="622.00" y="37.30" width="1.20" height="2.40" fill="#5ac85a"/>
<rect x="624.00" y="38.30" width="1.20" height="1.40" fill="#c8a03a"/>
<path d="M629.4 38.2 L630.2 37.4 L631 38.2 M629.4 38.9 L630.2 39.7 L631 38.9" fill="none" stroke="#fff" stroke-width="0.35"/>
<path d="M634.6 37.7 H638.6 L636.6 39.9 Z" fill="#f0f0f0"/>
<line x1="76.40" y1="51.50" x2="82.00" y2="46.90" stroke="#e8e8e8" stroke-width="0.8"/>
<circle cx="81.20" cy="50.50" r="1.7" fill="#d8342a"/>
<circle cx="81.20" cy="50.50" r="0.6" fill="#fff"/>
<line x1="87.20" y1="51.70" x2="91.80" y2="47.30" stroke="#e8e8e8" stroke-width="0.6"/>
<circle cx="87.40" cy="51.50" r="0.8" fill="#f0f0f0"/>
<circle cx="91.60" cy="47.50" r="0.8" fill="#f0f0f0"/>
<rect x="95.00" y="44.80" width="11.20" height="9.30" fill="#8a8a8a" rx="0.6"/>
<path d="M97.6 51.1 L100 48.5 L102 50.1 L104 47.7" fill="none" stroke="#555" stroke-width="0.6"/>
<rect x="97.00" y="46.90" width="7.40" height="5.40" fill="none" stroke="#6a6a6a" stroke-width="0.4" stroke-dasharray="0.8 0.6"/>
<rect x="111.00" y="44.80" width="11.30" height="9.30" fill="#8a8a8a" rx="0.6"/>
<rect x="113.00" y="46.70" width="7.40" height="5.60" fill="#b8a478" rx="0.3"/>
<line x1="116.70" y1="46.70" x2="116.70" y2="52.30" stroke="#3a5a9a" stroke-width="0.6"/>
<rect x="113.80" y="49.10" width="2.20" height="2.40" fill="#3a6fc0"/>
<rect x="117.60" y="49.10" width="2.20" height="2.40" fill="#c8803a"/>
<rect x="125.80" y="44.80" width="11.20" height="9.30" fill="#8a8a8a" rx="0.6"/>
<rect x="128.00" y="47.10" width="6.80" height="5.00" fill="#a0a0a0" stroke="#666" stroke-width="0.5" stroke-dasharray="1 0.6"/>
<path d="M140 48.9 Q139.4 47.1 142 47.3 Q145.2 47.1 145 49.5 Q144.6 51.7 141.6 51.1 Q139.6 50.7 140 48.9 M141 51.1 L140.4 52.3" fill="none" stroke="#9a9a9a" stroke-width="0.5"/>
<path d="M149.4 47.3 L152.4 48.5 L155.6 47.1 L154.4 51.3 L150.2 51.7 Z" fill="none" stroke="#9a9a9a" stroke-width="0.5"/>
<rect x="162.80" y="44.80" width="11.10" height="9.30" fill="#8a8a8a" rx="0.6"/>
<rect x="164.60" y="46.70" width="7.60" height="5.60" fill="#6a7a6a" rx="0.3"/>
<rect x="165.60" y="47.90" width="5.60" height="3.40" fill="#b8c0a0"/>
<path d="M166.4 50.9 L168 48.7 L169.4 50.1 L170.6 48.5" fill="none" stroke="#c8a03a" stroke-width="0.5"/>
<text x="178.40" y="50.22" font-size="3.15" fill="#e6e6e6" font-weight="bold" textLength="68.40" lengthAdjust="spacingAndGlyphs">Selection Tool: Rectangular Marquee Mode</text>
<circle cx="462.60" cy="48.50" r="1.7" fill="none" stroke="#d0d0d0" stroke-width="0.6"/>
<line x1="463.80" y1="49.90" x2="466.60" y2="52.50" stroke="#d0d0d0" stroke-width="0.9"/>
<line x1="459.60" y1="51.90" x2="462.00" y2="49.90" stroke="#b8b8e0" stroke-width="0.6"/>
<circle cx="475.20" cy="49.50" r="2.5" fill="#d0d0ee"/>
<circle cx="475.20" cy="49.50" r="1.0" fill="#262626"/>
<circle cx="478.20" cy="49.50" r="0.55" fill="#d0d0ee"/>
<circle cx="477.32" cy="51.62" r="0.55" fill="#d0d0ee"/>
<circle cx="475.20" cy="52.50" r="0.55" fill="#d0d0ee"/>
<circle cx="473.08" cy="51.62" r="0.55" fill="#d0d0ee"/>
<circle cx="472.20" cy="49.50" r="0.55" fill="#d0d0ee"/>
<circle cx="473.08" cy="47.38" r="0.55" fill="#d0d0ee"/>
<circle cx="475.20" cy="46.50" r="0.55" fill="#d0d0ee"/>
<circle cx="477.32" cy="47.38" r="0.55" fill="#d0d0ee"/>
<path d="M480.7 49.3 H482.90000000000003 L481.8 50.7 Z" fill="#b0b0b0"/>
<line x1="489.40" y1="52.30" x2="494.20" y2="46.90" stroke="#9a9ad8" stroke-width="1.2"/>
<line x1="489.00" y1="52.70" x2="490.20" y2="51.30" stroke="#e0e0e0" stroke-width="0.8"/>
<path d="M497.09999999999997 49.3 H499.3 L498.2 50.7 Z" fill="#b0b0b0"/>
<circle cx="506.00" cy="48.50" r="1.9" fill="#e0e0f0"/>
<rect x="506.40" y="49.10" width="4.20" height="3.60" fill="#b8b8d0" rx="0.3"/>
<path d="M513.5 49.3 H515.7 L514.6 50.7 Z" fill="#b0b0b0"/>
<rect x="519.00" y="44.80" width="12.20" height="9.30" fill="#8c8c8c" rx="0.6"/>
<rect x="521.40" y="46.70" width="7.40" height="5.60" fill="#3a3a6a" rx="0.3"/>
<rect x="522.60" y="47.90" width="5.00" height="3.20" fill="#2a2a8a"/>
<ellipse cx="539.40" cy="49.50" rx="3.4" ry="2.0" fill="#c8c8f0" transform="rotate(-25 539.4 49.5)"/>
<ellipse cx="539.40" cy="49.50" rx="4.2" ry="1.2" fill="none" stroke="#8a7fd8" stroke-width="0.5" transform="rotate(-25 539.4 49.5)"/>
<path d="M551 46.5 A3 3 0 0 1 551 52.5 Z" fill="#f4f4f4"/>
<path d="M551 46.5 A3 3 0 0 0 551 52.5 Z" fill="#5a5ab0"/>
<rect x="559.00" y="44.80" width="12.20" height="9.30" fill="#9a8a6a" rx="0.6"/>
<rect x="560.80" y="46.50" width="8.60" height="6.00" fill="#d8c898" rx="0.3"/>
<path d="M562 51.5 L565 48.5 L567 50.1 L568.6 48.1" fill="none" stroke="#8a7a4a" stroke-width="0.5"/>
<circle cx="567.80" cy="47.90" r="0.8" fill="#f4f4ff"/>
<ellipse cx="577.40" cy="49.50" rx="3.0" ry="1.6" fill="#b8b8ec" transform="rotate(-30 577.4 49.5)"/>
<line x1="574.40" y1="51.50" x2="580.40" y2="47.50" stroke="#f0f0f8" stroke-width="0.5"/>
<path d="M582.9 49.3 H585.1 L584 50.7 Z" fill="#b0b0b0"/>
<rect x="590.60" y="46.50" width="8.20" height="6.20" fill="#6a1f2a" rx="0.3"/>
<rect x="591.80" y="47.70" width="5.80" height="3.80" fill="#2a2a6a"/>
<ellipse cx="606.60" cy="49.10" rx="3.4" ry="2.6" fill="#7ab0c8"/>
<path d="M603.6 50.1 H609.6 L608.8 52.7 H604.4Z" fill="#d8d8d8"/>
<line x1="610.60" y1="46.90" x2="609.40" y2="51.90" stroke="#e8e8e8" stroke-width="0.7"/>
<circle cx="619.60" cy="48.30" r="1.6" fill="#b8b8ec"/>
<line x1="616.40" y1="50.70" x2="622.80" y2="50.70" stroke="#e0e0e0" stroke-width="0.5"/>
<line x1="619.60" y1="46.30" x2="619.60" y2="52.50" stroke="#8a8ad8" stroke-width="0.5"/>
<line x1="617.40" y1="52.50" x2="621.80" y2="52.50" stroke="#e0e0e0" stroke-width="0.5"/>
<path d="M625.5 49.3 H627.7 L626.6 50.7 Z" fill="#b0b0b0"/>
<path d="M634.6 48.9 H638.6 L636.6 51.1 Z" fill="#f0f0f0"/>
</g>
<g id="statusbar">
<rect x="20.00" y="384.60" width="691.00" height="9.40" fill="#262626"/>
<text x="21.90" y="390.68" font-size="3.9" fill="#e0e0e0" textLength="68.80" lengthAdjust="spacingAndGlyphs">For help, press F1 or click the ? icon</text>
<text x="498.00" y="390.76" font-size="4.1" fill="#d0d0d0" textLength="26.30" lengthAdjust="spacingAndGlyphs">X: 1454170'0"</text>
<text x="536.30" y="390.76" font-size="4.1" fill="#d0d0d0" textLength="23.50" lengthAdjust="spacingAndGlyphs">Y: 477727'0"</text>
<text x="574.00" y="390.76" font-size="4.1" fill="#d0d0d0" textLength="9.00" lengthAdjust="spacingAndGlyphs">Z: 0"</text>
<rect x="611.40" y="385.60" width="7.80" height="6.60" fill="#8f8f8f" rx="0.4"/>
<rect x="619.95" y="385.60" width="7.80" height="6.60" fill="#8f8f8f" rx="0.4"/>
<rect x="628.50" y="385.60" width="7.80" height="6.60" fill="#8f8f8f" rx="0.4"/>
<rect x="637.05" y="385.60" width="7.80" height="6.60" fill="#8f8f8f" rx="0.4"/>
<rect x="645.60" y="385.60" width="7.80" height="6.60" fill="#8f8f8f" rx="0.4"/>
<rect x="654.15" y="385.60" width="7.80" height="6.60" fill="#8f8f8f" rx="0.4"/>
<rect x="662.70" y="385.60" width="7.80" height="6.60" fill="#8f8f8f" rx="0.4"/>
<rect x="612.80" y="386.60" width="2.20" height="2.00" fill="none" stroke="#555" stroke-width="0.4"/>
<rect x="615.60" y="386.60" width="2.20" height="2.00" fill="none" stroke="#555" stroke-width="0.4"/>
<rect x="612.80" y="389.20" width="2.20" height="2.00" fill="none" stroke="#555" stroke-width="0.4"/>
<rect x="615.60" y="389.20" width="2.20" height="2.00" fill="none" stroke="#555" stroke-width="0.4"/>
<rect x="621.35" y="386.80" width="5.00" height="4.40" fill="none" stroke="#6a6a6a" stroke-width="0.4"/>
<line x1="621.35" y1="389.00" x2="626.35" y2="389.00" stroke="#6a6a6a" stroke-width="0.3"/>
<line x1="623.85" y1="386.80" x2="623.85" y2="391.20" stroke="#6a6a6a" stroke-width="0.3"/>
<rect x="630.10" y="386.80" width="3.80" height="3.60" fill="none" stroke="#a8a8a8" stroke-width="0.4"/>
<circle cx="634.10" cy="390.60" r="0.9" fill="#6a6a6a"/>
<rect x="639.05" y="386.60" width="3.80" height="4.80" fill="none" stroke="#777" stroke-width="0.4"/>
<line x1="640.95" y1="386.60" x2="640.95" y2="391.40" stroke="#777" stroke-width="0.3"/>
<path d="M647.0 386.8 H652.0 L650.6 389 L651.6 391.4 L649.0 389.6 Z" fill="#b8b8b8" stroke="#666" stroke-width="0.3"/>
<line x1="655.55" y1="391.40" x2="660.35" y2="386.60" stroke="#c8c8c8" stroke-width="0.7"/>
<circle cx="659.55" cy="390.60" r="0.8" fill="#5a5a5a"/>
<circle cx="666.60" cy="388.90" r="1.6" fill="none" stroke="#5a5a5a" stroke-width="0.4"/>
<line x1="664.10" y1="391.40" x2="669.10" y2="386.60" stroke="#b0b0b0" stroke-width="0.4"/>
<rect x="671.25" y="385.60" width="7.80" height="6.60" fill="#3e3e3e" rx="0.4"/>
<line x1="673.25" y1="387.40" x2="676.85" y2="390.80" stroke="#5a5a5a" stroke-width="0.6"/>
<rect x="679.80" y="385.60" width="7.80" height="6.60" fill="#3c3c3c" rx="0.4"/>
<path d="M683.6999999999999 386.2 L686.5999999999999 388.9 L683.6999999999999 391.6 L680.8 388.9 Z" fill="#b8b8b8"/>
<circle cx="683.70" cy="388.90" r="0.9" fill="#555"/>
<rect x="688.35" y="385.60" width="7.80" height="6.60" fill="#3c3c3c" rx="0.4"/>
<rect x="690.95" y="386.80" width="2.80" height="4.20" fill="none" rx="0.3" stroke="#d0d0d0" stroke-width="0.6"/>
<rect x="696.90" y="385.60" width="7.80" height="6.60" fill="#3c3c3c" rx="0.4"/>
<circle cx="700.80" cy="388.90" r="1.9" fill="none" stroke="#d0d0d0" stroke-width="0.6"/>
<line x1="700.80" y1="387.60" x2="700.80" y2="389.20" stroke="#d0d0d0" stroke-width="0.4"/>
</g>
<g id="right-palettes">
<rect x="641.80" y="24.10" width="69.20" height="360.50" fill="#2c2c2c"/>
<rect x="641.80" y="24.10" width="2.40" height="360.50" fill="#2b2b2b"/>
<rect x="644.20" y="24.20" width="66.80" height="5.40" fill="#1d1d1d"/>
<path d="M645.45 25.25 L647.95 27.75 M647.95 25.25 L645.45 27.75" fill="none" stroke="#c8c8c8" stroke-width="0.5"/>
<text x="650.00" y="27.92" font-size="4.0" fill="#e6e6e6" font-weight="bold" textLength="36.70" lengthAdjust="spacingAndGlyphs">Object Info - Shape</text>
<line x1="700.60" y1="25.50" x2="702.80" y2="25.50" stroke="#9a9a9a" stroke-width="0.4"/>
<line x1="700.60" y1="26.40" x2="702.80" y2="26.40" stroke="#9a9a9a" stroke-width="0.4"/>
<line x1="700.60" y1="27.30" x2="702.80" y2="27.30" stroke="#9a9a9a" stroke-width="0.4"/>
<text x="706.20" y="27.85" font-size="3.8" fill="#c8c8c8" font-weight="bold">?</text>
<rect x="644.20" y="29.60" width="66.80" height="9.20" fill="#1a1a1a"/>
<rect x="644.70" y="30.20" width="19.10" height="8.60" fill="#343434" rx="0.8"/>
<text x="648.00" y="35.98" font-size="3.9" fill="#f0f0f0" font-weight="bold" textLength="11.40" lengthAdjust="spacingAndGlyphs">Shape</text>
<text x="669.00" y="35.98" font-size="3.9" fill="#9a9a9a" textLength="8.20" lengthAdjust="spacingAndGlyphs">Data</text>
<line x1="681.60" y1="32.20" x2="681.60" y2="37.00" stroke="#4a4a4a" stroke-width="0.4"/>
<text x="685.40" y="35.98" font-size="3.9" fill="#9a9a9a" textLength="12.60" lengthAdjust="spacingAndGlyphs">Render</text>
<line x1="701.50" y1="32.20" x2="701.50" y2="37.00" stroke="#4a4a4a" stroke-width="0.4"/>
<text x="645.40" y="43.88" font-size="3.9" fill="#f0f0f0" font-weight="bold" textLength="18.40" lengthAdjust="spacingAndGlyphs">Site Model</text>
<text x="646.40" y="51.94" font-size="3.5" fill="#d6d6d6" textLength="9.40" lengthAdjust="spacingAndGlyphs">Class:</text>
<rect x="658.00" y="48.60" width="51.00" height="4.20" fill="#636363" rx="0.8"/>
<rect x="705.60" y="48.60" width="3.40" height="4.20" fill="#3569d6" rx="0.8"/>
<path d="M706.5 50.400000000000006 L707.3 49.6 L708.1 50.400000000000006 M706.5 51.1 L707.3 51.900000000000006 L708.1 51.1" fill="none" stroke="#fff" stroke-width="0.35"/>
<text x="659.40" y="51.87" font-size="3.3" fill="#f2f2f2" font-weight="bold" textLength="7.60" lengthAdjust="spacingAndGlyphs">None</text>
<text x="646.40" y="59.64" font-size="3.5" fill="#d6d6d6" textLength="9.40" lengthAdjust="spacingAndGlyphs">Layer:</text>
<rect x="658.00" y="56.30" width="51.00" height="4.20" fill="#636363" rx="0.8"/>
<rect x="705.60" y="56.30" width="3.40" height="4.20" fill="#3569d6" rx="0.8"/>
<path d="M706.5 58.1 L707.3 57.3 L708.1 58.1 M706.5 58.8 L707.3 59.6 L708.1 58.8" fill="none" stroke="#fff" stroke-width="0.35"/>
<text x="659.40" y="59.57" font-size="3.3" fill="#f2f2f2" font-weight="bold" textLength="30.20" lengthAdjust="spacingAndGlyphs">Site Model-Existing</text>
<rect x="647.00" y="63.00" width="60.00" height="19.40" fill="#2a2a2a" rx="0.8" stroke="#3c3c3c" stroke-width="0.4"/>
<rect x="651.00" y="66.60" width="7.20" height="6.40" fill="#6fa8b0" rx="0.3"/>
<rect x="652.40" y="67.80" width="4.40" height="4.00" fill="#8cc8cc"/>
<rect x="651.00" y="73.00" width="7.20" height="6.40" fill="#5a4a6a" rx="0.3"/>
<rect x="653.00" y="74.00" width="3.60" height="4.40" fill="none" stroke="#d84ad8" stroke-width="0.6"/>
<text x="663.00" y="68.91" font-size="3.4" fill="#d6d6d6" textLength="3.20" lengthAdjust="spacingAndGlyphs">X:</text>
<text x="669.60" y="68.91" font-size="3.4" fill="#e6e6e6" font-weight="bold" textLength="24.40" lengthAdjust="spacingAndGlyphs">1454101'1.044"</text>
<line x1="668.60" y1="70.20" x2="705.40" y2="70.20" stroke="#444" stroke-width="0.4"/>
<text x="663.00" y="76.11" font-size="3.4" fill="#d6d6d6" textLength="3.20" lengthAdjust="spacingAndGlyphs">Y:</text>
<text x="669.60" y="76.11" font-size="3.4" fill="#e6e6e6" font-weight="bold" textLength="20.40" lengthAdjust="spacingAndGlyphs">477816'7.152"</text>
<line x1="668.60" y1="77.40" x2="705.40" y2="77.40" stroke="#444" stroke-width="0.4"/>
<text x="646.00" y="88.64" font-size="3.5" fill="#d6d6d6" textLength="13.80" lengthAdjust="spacingAndGlyphs">Rotation:</text>
<text x="681.70" y="88.64" font-size="3.5" fill="#e6e6e6" font-weight="bold" textLength="17.00" lengthAdjust="spacingAndGlyphs">0.000000°</text>
<line x1="680.60" y1="89.90" x2="708.40" y2="89.90" stroke="#444" stroke-width="0.4"/>
<text x="646.00" y="95.94" font-size="3.5" fill="#d6d6d6" textLength="30.60" lengthAdjust="spacingAndGlyphs">Geometry Layers Z:</text>
<text x="681.70" y="95.94" font-size="3.5" fill="#e6e6e6" font-weight="bold" textLength="8.40" lengthAdjust="spacingAndGlyphs">-8'0"</text>
<rect x="645.30" y="99.70" width="63.70" height="4.40" fill="#5a5a5a" rx="0.8"/>
<text x="677.20" y="103.14" font-size="3.5" fill="#f4f4f4" font-weight="bold" text-anchor="middle" textLength="35.00" lengthAdjust="spacingAndGlyphs">Site Model Settings...</text>
<rect x="645.30" y="106.40" width="63.70" height="4.40" fill="#5a5a5a" rx="0.8"/>
<text x="677.20" y="109.84" font-size="3.5" fill="#f4f4f4" font-weight="bold" text-anchor="middle" textLength="11.60" lengthAdjust="spacingAndGlyphs">Update</text>
<rect x="645.30" y="113.10" width="63.70" height="4.40" fill="#5a5a5a" rx="0.8"/>
<text x="677.20" y="116.54" font-size="3.5" fill="#f4f4f4" font-weight="bold" text-anchor="middle" textLength="29.60" lengthAdjust="spacingAndGlyphs">Create a Snapshot</text>
<text x="646.00" y="124.14" font-size="3.5" fill="#d6d6d6" textLength="17.00" lengthAdjust="spacingAndGlyphs">2D Display:</text>
<rect x="680.60" y="120.80" width="28.40" height="4.20" fill="#636363" rx="0.8"/>
<rect x="705.60" y="120.80" width="3.40" height="4.20" fill="#3569d6" rx="0.8"/>
<path d="M706.5 122.60000000000001 L707.3 121.80000000000001 L708.1 122.60000000000001 M706.5 123.30000000000001 L707.3 124.10000000000001 L708.1 123.30000000000001" fill="none" stroke="#fff" stroke-width="0.35"/>
<text x="682.00" y="124.07" font-size="3.3" fill="#f2f2f2" font-weight="bold" textLength="19.00" lengthAdjust="spacingAndGlyphs">Proposed +...</text>
<text x="646.00" y="131.64" font-size="3.5" fill="#d6d6d6" textLength="13.20" lengthAdjust="spacingAndGlyphs">2D Style:</text>
<rect x="680.60" y="128.30" width="28.40" height="4.20" fill="#636363" rx="0.8"/>
<rect x="705.60" y="128.30" width="3.40" height="4.20" fill="#3569d6" rx="0.8"/>
<path d="M706.5 130.1 L707.3 129.3 L708.1 130.1 M706.5 130.8 L707.3 131.6 L708.1 130.8" fill="none" stroke="#fff" stroke-width="0.35"/>
<text x="682.00" y="131.57" font-size="3.3" fill="#f2f2f2" font-weight="bold" textLength="19.60" lengthAdjust="spacingAndGlyphs">2D Contours</text>
<text x="646.00" y="139.34" font-size="3.5" fill="#d6d6d6" textLength="17.00" lengthAdjust="spacingAndGlyphs">3D Display:</text>
<rect x="680.60" y="136.00" width="28.40" height="4.20" fill="#636363" rx="0.8"/>
<rect x="705.60" y="136.00" width="3.40" height="4.20" fill="#3569d6" rx="0.8"/>
<path d="M706.5 137.79999999999998 L707.3 137.0 L708.1 137.79999999999998 M706.5 138.5 L707.3 139.29999999999998 L708.1 138.5" fill="none" stroke="#fff" stroke-width="0.35"/>
<text x="682.00" y="139.27" font-size="3.3" fill="#f2f2f2" font-weight="bold" textLength="19.00" lengthAdjust="spacingAndGlyphs">Proposed 3...</text>
<text x="646.00" y="146.64" font-size="3.5" fill="#d6d6d6" textLength="13.20" lengthAdjust="spacingAndGlyphs">3D Style:</text>
<rect x="680.60" y="143.30" width="28.40" height="4.20" fill="#636363" rx="0.8"/>
<rect x="705.60" y="143.30" width="3.40" height="4.20" fill="#3569d6" rx="0.8"/>
<path d="M706.5 145.1 L707.3 144.3 L708.1 145.1 M706.5 145.8 L707.3 146.6 L708.1 145.8" fill="none" stroke="#fff" stroke-width="0.35"/>
<text x="682.00" y="146.57" font-size="3.3" fill="#f2f2f2" font-weight="bold" textLength="13.60" lengthAdjust="spacingAndGlyphs">3D Mesh</text>
<text x="646.00" y="154.34" font-size="3.5" fill="#d6d6d6" textLength="28.40" lengthAdjust="spacingAndGlyphs">Area Display Type:</text>
<rect x="680.60" y="151.00" width="28.40" height="4.20" fill="#636363" rx="0.8"/>
<rect x="705.60" y="151.00" width="3.40" height="4.20" fill="#3569d6" rx="0.8"/>
<path d="M706.5 152.79999999999998 L707.3 152.0 L708.1 152.79999999999998 M706.5 153.5 L707.3 154.29999999999998 L708.1 153.5" fill="none" stroke="#fff" stroke-width="0.35"/>
<text x="682.00" y="154.27" font-size="3.3" fill="#f2f2f2" font-weight="bold" textLength="19.60" lengthAdjust="spacingAndGlyphs">&lt;Use Docu...</text>
<text x="646.00" y="161.94" font-size="3.5" fill="#d6d6d6" textLength="23.60" lengthAdjust="spacingAndGlyphs">Projected Area:</text>
<text x="681.20" y="161.94" font-size="3.5" fill="#e6e6e6" font-weight="bold" textLength="13.40" lengthAdjust="spacingAndGlyphs">6800.276</text>
<text x="698.20" y="161.94" font-size="3.5" fill="#e6e6e6" font-weight="bold" textLength="6.60" lengthAdjust="spacingAndGlyphs">sq ft</text>
<text x="646.00" y="169.14" font-size="3.5" fill="#d6d6d6" textLength="28.60" lengthAdjust="spacingAndGlyphs">Surface Area (Exis...</text>
<text x="681.20" y="169.14" font-size="3.5" fill="#e6e6e6" font-weight="bold" textLength="13.40" lengthAdjust="spacingAndGlyphs">6579.592</text>
<text x="698.20" y="169.14" font-size="3.5" fill="#e6e6e6" font-weight="bold" textLength="6.60" lengthAdjust="spacingAndGlyphs">sq ft</text>
<text x="646.00" y="175.84" font-size="3.5" fill="#d6d6d6" textLength="27.60" lengthAdjust="spacingAndGlyphs">Surface Area (Pro...</text>
<text x="681.20" y="175.84" font-size="3.5" fill="#e6e6e6" font-weight="bold" textLength="13.40" lengthAdjust="spacingAndGlyphs">6579.592</text>
<text x="698.20" y="175.84" font-size="3.5" fill="#e6e6e6" font-weight="bold" textLength="6.60" lengthAdjust="spacingAndGlyphs">sq ft</text>
<rect x="645.30" y="178.50" width="63.70" height="4.40" fill="#5a5a5a" rx="0.8"/>
<text x="677.20" y="181.94" font-size="3.5" fill="#f4f4f4" font-weight="bold" text-anchor="middle" textLength="51.00" lengthAdjust="spacingAndGlyphs">Update Cut and Fill Calculations</text>
<text x="646.00" y="189.44" font-size="3.5" fill="#d6d6d6" textLength="29.40" lengthAdjust="spacingAndGlyphs">Volume Display Ty...</text>
<rect x="680.60" y="186.10" width="28.40" height="4.20" fill="#636363" rx="0.8"/>
<rect x="705.60" y="186.10" width="3.40" height="4.20" fill="#3569d6" rx="0.8"/>
<path d="M706.5 187.89999999999998 L707.3 187.1 L708.1 187.89999999999998 M706.5 188.6 L707.3 189.39999999999998 L708.1 188.6" fill="none" stroke="#fff" stroke-width="0.35"/>
<text x="682.00" y="189.37" font-size="3.3" fill="#f2f2f2" font-weight="bold" textLength="19.60" lengthAdjust="spacingAndGlyphs">&lt;Use Docu...</text>
<text x="646.00" y="196.64" font-size="3.5" fill="#d6d6d6" textLength="27.40" lengthAdjust="spacingAndGlyphs">Volume (Existing):</text>
<text x="681.20" y="196.64" font-size="3.5" fill="#e6e6e6" font-weight="bold" textLength="26.60" lengthAdjust="spacingAndGlyphs">&lt;Volume needs...</text>
<line x1="644.20" y1="199.20" x2="711.00" y2="199.20" stroke="#232323" stroke-width="0.5"/>
<text x="644.60" y="204.34" font-size="3.5" fill="#d6d6d6" textLength="9.40" lengthAdjust="spacingAndGlyphs">Name:</text>
<text x="656.80" y="204.34" font-size="3.5" fill="#e6e6e6" font-weight="bold" textLength="19.00" lengthAdjust="spacingAndGlyphs">Site Model-1</text>
<circle cx="643.20" cy="200.00" r="0.25" fill="#8a8a8a"/>
<circle cx="643.20" cy="201.30" r="0.25" fill="#8a8a8a"/>
<circle cx="643.20" cy="202.60" r="0.25" fill="#8a8a8a"/>
<circle cx="643.20" cy="203.90" r="0.25" fill="#8a8a8a"/>
<circle cx="674.70" cy="207.00" r="0.3" fill="#8a8a8a"/>
<circle cx="676.00" cy="207.00" r="0.3" fill="#8a8a8a"/>
<circle cx="677.30" cy="207.00" r="0.3" fill="#8a8a8a"/>
<rect x="644.20" y="208.50" width="66.80" height="5.90" fill="#1d1d1d"/>
<path d="M645.45 210.15 L647.95 212.65 M647.95 210.15 L645.45 212.65" fill="none" stroke="#c8c8c8" stroke-width="0.5"/>
<text x="650.00" y="212.89" font-size="4.2" fill="#e6e6e6" font-weight="bold" textLength="39.00" lengthAdjust="spacingAndGlyphs">Navigation - Classes</text>
<line x1="700.40" y1="210.40" x2="702.60" y2="210.40" stroke="#9a9a9a" stroke-width="0.4"/>
<line x1="700.40" y1="211.30" x2="702.60" y2="211.30" stroke="#9a9a9a" stroke-width="0.4"/>
<line x1="700.40" y1="212.20" x2="702.60" y2="212.20" stroke="#9a9a9a" stroke-width="0.4"/>
<text x="706.20" y="212.75" font-size="3.8" fill="#c8c8c8" font-weight="bold">?</text>
<rect x="644.20" y="214.40" width="66.80" height="9.40" fill="#161616"/>
<rect x="644.60" y="215.00" width="8.00" height="8.40" fill="#4a4a4a" rx="0.6"/>
<path d="M645.6 220.3 L650.8 217.5 M645.6 218.70000000000002 L651.1999999999999 220.9 M646.6 221.5 L650.0 216.9" fill="none" stroke="#8a8ad8" stroke-width="0.6"/>
<path d="M654.6 218.10000000000002 L657 216.70000000000002 L659.4 218.10000000000002 V220.70000000000002 L657 222.10000000000002 L654.6 220.70000000000002 Z" fill="#c8c8ec"/>
<line x1="654.60" y1="219.30" x2="659.40" y2="219.30" stroke="#6a6ab8" stroke-width="0.3"/>
<line x1="657.00" y1="216.70" x2="657.00" y2="222.10" stroke="#6a6ab8" stroke-width="0.3"/>
<rect x="662.90" y="216.70" width="4.80" height="5.20" fill="#dcdcdc" rx="0.3"/>
<rect x="662.90" y="216.70" width="1.60" height="5.20" fill="#a8a8a8"/>
<path d="M671.0 216.9 L675.8 221.70000000000002 M675.8 216.9 L671.0 221.70000000000002" fill="none" stroke="#7aa8e8" stroke-width="0.6"/>
<rect x="670.30" y="216.20" width="1.40" height="1.40" fill="#f0f0f0"/>
<rect x="675.10" y="216.20" width="1.40" height="1.40" fill="#f0f0f0"/>
<rect x="670.30" y="221.00" width="1.40" height="1.40" fill="#f0f0f0"/>
<rect x="675.10" y="221.00" width="1.40" height="1.40" fill="#f0f0f0"/>
<rect x="679.50" y="216.50" width="4.40" height="5.60" fill="#e8e8e8" rx="0.4"/>
<line x1="680.50" y1="218.10" x2="682.90" y2="218.10" stroke="#555" stroke-width="0.3"/>
<line x1="680.50" y1="219.30" x2="682.90" y2="219.30" stroke="#555" stroke-width="0.3"/>
<line x1="680.50" y1="220.50" x2="682.90" y2="220.50" stroke="#555" stroke-width="0.3"/>
<rect x="688.90" y="216.50" width="4.20" height="4.40" fill="#d8d8d8" rx="0.3"/>
<circle cx="689.30" cy="220.30" r="1.9" fill="#f4f4f4"/>
<path d="M689.3 220.3 L689.3 218.4 A1.9 1.9 0 0 1 691.1999999999999 220.3Z" fill="#777"/>
<text x="645.40" y="227.94" font-size="3.5" fill="#d6d6d6" textLength="22.40" lengthAdjust="spacingAndGlyphs">Class Options:</text>
<rect x="669.00" y="224.60" width="40.00" height="4.20" fill="#636363" rx="0.8"/>
<rect x="705.60" y="224.60" width="3.40" height="4.20" fill="#3569d6" rx="0.8"/>
<path d="M706.5 226.39999999999998 L707.3 225.6 L708.1 226.39999999999998 M706.5 227.1 L707.3 227.89999999999998 L708.1 227.1" fill="none" stroke="#fff" stroke-width="0.35"/>
<text x="670.40" y="227.87" font-size="3.3" fill="#f2f2f2" font-weight="bold" textLength="33.00" lengthAdjust="spacingAndGlyphs">Show/Snap/Modify O...</text>
<text x="645.40" y="233.14" font-size="3.5" fill="#d6d6d6" textLength="8.00" lengthAdjust="spacingAndGlyphs">Filter:</text>
<rect x="669.00" y="229.80" width="40.00" height="4.20" fill="#636363" rx="0.8"/>
<rect x="705.60" y="229.80" width="3.40" height="4.20" fill="#3569d6" rx="0.8"/>
<path d="M706.5 231.6 L707.3 230.8 L708.1 231.6 M706.5 232.3 L707.3 233.1 L708.1 232.3" fill="none" stroke="#fff" stroke-width="0.35"/>
<text x="670.40" y="233.07" font-size="3.3" fill="#f2f2f2" font-weight="bold" textLength="21.60" lengthAdjust="spacingAndGlyphs">&lt;All Classes&gt;</text>
<rect x="644.60" y="235.20" width="65.60" height="7.00" fill="#1f1f1f" rx="0.8"/>
<circle cx="648.80" cy="238.20" r="1.2" fill="none" stroke="#c8c8c8" stroke-width="0.45"/>
<line x1="649.70" y1="239.20" x2="650.80" y2="240.40" stroke="#c8c8c8" stroke-width="0.5"/>
<text x="653.60" y="239.91" font-size="3.4" fill="#8a8a8a" textLength="7.80" lengthAdjust="spacingAndGlyphs">earch</text>
<circle cx="705.70" cy="238.60" r="1.7" fill="#e0e0e0"/>
<circle cx="705.70" cy="238.60" r="0.6" fill="#1f1f1f"/>
<rect x="644.20" y="244.20" width="66.80" height="140.40" fill="#1e1e1e"/>
<rect x="644.20" y="244.20" width="66.80" height="7.80" fill="#2a2a2a"/>
<line x1="649.60" y1="252.00" x2="649.60" y2="384.60" stroke="#2c2c2c" stroke-width="0.5"/>
<line x1="655.60" y1="252.00" x2="655.60" y2="384.60" stroke="#2c2c2c" stroke-width="0.5"/>
<line x1="663.20" y1="252.00" x2="663.20" y2="384.60" stroke="#2c2c2c" stroke-width="0.5"/>
<line x1="663.20" y1="244.20" x2="663.20" y2="252.00" stroke="#3c3c3c" stroke-width="0.5"/>
<text x="645.40" y="249.56" font-size="4.4" fill="#e0e0e0" textLength="14.60" lengthAdjust="spacingAndGlyphs">Visibil...</text>
<text x="675.00" y="249.56" font-size="4.4" fill="#e0e0e0" textLength="22.60" lengthAdjust="spacingAndGlyphs">Class Name</text>
<ellipse cx="646.90" cy="255.70" rx="1.9" ry="1.2" fill="#e6e6e6"/>
<circle cx="646.90" cy="255.70" r="0.55" fill="#1e1e1e"/>
<ellipse cx="646.90" cy="261.10" rx="1.9" ry="1.2" fill="#e6e6e6"/>
<circle cx="646.90" cy="261.10" r="0.55" fill="#1e1e1e"/>
<path d="M666 255.9 L667 257 L669.2 254.2" fill="none" stroke="#e6e6e6" stroke-width="0.55"/>
<text x="679.00" y="256.98" font-size="3.6" fill="#f4f4f4" font-weight="bold" textLength="9.40" lengthAdjust="spacingAndGlyphs">None</text>
<text x="679.00" y="262.38" font-size="3.6" fill="#e0e0e0" textLength="13.40" lengthAdjust="spacingAndGlyphs">NonPlot</text>
</g>
</svg>
</body>
</html>
